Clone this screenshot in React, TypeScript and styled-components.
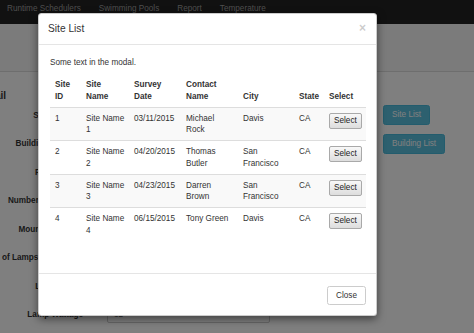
import React from "react";
import styled, { createGlobalStyle } from "styled-components";

const Global = createGlobalStyle`
  html, body { margin: 0; padding: 0; }
  body {
    font-family: "Liberation Sans", Arial, sans-serif;
    font-size: 8.2px;
    line-height: 11.25px;
    color: #333;
    background: #fff;
    overflow: hidden;
  }
  * { box-sizing: border-box; }
`;

const Page = styled.div`
  width: 474px;
  height: 333px;
  position: relative;
  overflow: hidden;
  background: #fff;
`;

const NavBar = styled.nav`
  height: 24px;
  background: #222;
  display: flex;
  align-items: flex-start;
  gap: 18px;
  padding: 3px 0 0 7px;
`;

const NavItem = styled.a`
  color: #9d9d9d;
  font-size: 8.2px;
  line-height: 12px;
  text-decoration: none;
  white-space: nowrap;
`;

const Band = styled.div`
  height: 48px;
  background: #f7f7f7;
  border-bottom: 1px solid #dcdcdc;
`;

const Form = styled.div`
  padding-top: 19px;
`;

const Legend = styled.div`
  height: 10px;
  width: 6px;
  display: flex;
  justify-content: flex-end;
  white-space: nowrap;
  font-weight: bold;
  font-size: 10px;
  line-height: 10px;
  color: #333;
`;

const Row = styled.div`
  height: 28.5px;
  display: grid;
  grid-template-columns: 83px 163px auto;
  column-gap: 24px;
  align-items: center;
`;

const Label = styled.label`
  display: flex;
  justify-content: flex-end;
  white-space: nowrap;
  font-weight: bold;
  color: #333;
`;

const Input = styled.input`
  height: 17px;
  width: 163px;
  border: 1px solid #ccc;
  border-radius: 2px;
  padding: 0 6px;
  font: inherit;
  color: #555;
  background: #fff;
`;

const InfoButton = styled.button`
  justify-self: start;
  margin-left: 89px;
  height: 20px;
  padding: 0 8px;
  border: 1px solid #46b8da;
  border-radius: 2.5px;
  background: #5bc0de;
  color: #fff;
  font: inherit;
  line-height: 18px;
`;

const Backdrop = styled.div`
  position: absolute;
  inset: 0;
  background: rgba(0, 0, 0, 0.5);
`;

const ModalLayer = styled.div`
  position: absolute;
  inset: 0;
  display: flex;
  align-items: flex-start;
  padding: 13px 0 0 38px;
`;

const Dialog = styled.div`
  width: 339px;
  background: #fff;
  border: 1px solid rgba(0, 0, 0, 0.2);
  border-radius: 3.5px;
  box-shadow: 0 3px 9px rgba(0, 0, 0, 0.5);
  display: flex;
  flex-direction: column;
`;

const Header = styled.div`
  height: 31px;
  padding: 0 10px 0 9px;
  border-bottom: 1px solid #e5e5e5;
  display: flex;
  align-items: center;
  justify-content: space-between;
`;

const Title = styled.h4`
  margin: 0;
  font-size: 10.2px;
  font-weight: normal;
  line-height: 12px;
  color: #333;
`;

const CloseX = styled.span`
  font-size: 12px;
  font-weight: bold;
  line-height: 12px;
  color: #000;
  opacity: 0.2;
  margin-top: -2px;
`;

const Body = styled.div`
  padding: 12px 10px 12px 11px;
`;

const Para = styled.p`
  margin: 0 0 6px;
`;

const Table = styled.table`
  width: 316px;
  table-layout: fixed;
  border-collapse: collapse;
  margin-bottom: 20px;
`;

const Th = styled.th`
  text-align: left;
  vertical-align: bottom;
  font-weight: bold;
  padding: 5px 5.5px 5px 5px;
  border-bottom: 1px solid #ddd;
  color: #333;
`;

const Tr = styled.tr<{ $striped: boolean }>`
  background: ${(p) => (p.$striped ? "#f9f9f9" : "#fff")};
`;

const Td = styled.td`
  vertical-align: top;
  padding: 5px 3px 5px 5px;
  border-top: 1px solid #ddd;
  color: #333;
`;

const SelectButton = styled.button`
  height: 16px;
  padding: 0 4px;
  border: 1px solid #a9a9a9;
  border-radius: 2px;
  background: linear-gradient(#f8f8f8, #dddddd);
  color: #222;
  font: inherit;
  line-height: 14px;
`;

const Footer = styled.div`
  border-top: 1px solid #e5e5e5;
  padding: 12px 10px 10px 12px;
  display: flex;
  justify-content: flex-end;
`;

const CloseButton = styled.button`
  height: 19px;
  padding: 0 8px;
  border: 1px solid #ccc;
  border-radius: 2.5px;
  background: #fff;
  color: #333;
  font: inherit;
  line-height: 17px;
`;

const widths = [31, 48, 52, 57, 56, 30, 42];

const sites = [
  { id: "1", name: "Site Name 1", date: "03/11/2015", contact: "Michael Rock", city: "Davis", state: "CA" },
  { id: "2", name: "Site Name 2", date: "04/20/2015", contact: "Thomas Butler", city: "San Francisco", state: "CA" },
  { id: "3", name: "Site Name 3", date: "04/23/2015", contact: "Darren Brown", city: "San Francisco", state: "CA" },
  { id: "4", name: "Site Name 4", date: "06/15/2015", contact: "Tony Green", city: "Davis", state: "CA" },
];

const formRows: { label: string; button?: string; value?: string }[] = [
  { label: "Site Address", button: "Site List" },
  { label: "Building Address", button: "Building List" },
  { label: "Fixture Type" },
  { label: "Number of Fixtures" },
  { label: "Mounting Height" },
  { label: "Number of Lamps per Fixture" },
  { label: "Lamp Count" },
  { label: "Lamp Wattage", value: "32" },
];

export default function App() {
  return (
    <Page>
      <Global />
      <NavBar>
        <NavItem>Runtime Schedulers</NavItem>
        <NavItem>Swimming Pools</NavItem>
        <NavItem>Report</NavItem>
        <NavItem>Temperature</NavItem>
      </NavBar>
      <Band />
      <Form>
        <Legend>Detail</Legend>
        {formRows.map((r) => (
          <Row key={r.label}>
            <Label>{r.label}</Label>
            <Input defaultValue={r.value ?? ""} />
            {r.button ? <InfoButton>{r.button}</InfoButton> : <span />}
          </Row>
        ))}
      </Form>
      <Backdrop />
      <ModalLayer>
        <Dialog>
          <Header>
            <Title>Site List</Title>
            <CloseX>×</CloseX>
          </Header>
          <Body>
            <Para>Some text in the modal.</Para>
            <Table>
              <colgroup>
                {widths.map((w, i) => (
                  <col key={i} style={{ width: w }} />
                ))}
              </colgroup>
              <thead>
                <tr>
                  <Th>Site ID</Th>
                  <Th>Site Name</Th>
                  <Th>Survey Date</Th>
                  <Th>Contact Name</Th>
                  <Th>City</Th>
                  <Th>State</Th>
                  <Th>Select</Th>
                </tr>
              </thead>
              <tbody>
                {sites.map((s, i) => (
                  <Tr key={s.id} $striped={i % 2 === 0}>
                    <Td>{s.id}</Td>
                    <Td>{s.name}</Td>
                    <Td>{s.date}</Td>
                    <Td>{s.contact}</Td>
                    <Td>{s.city}</Td>
                    <Td>{s.state}</Td>
                    <Td>
                      <SelectButton>Select</SelectButton>
                    </Td>
                  </Tr>
                ))}
              </tbody>
            </Table>
          </Body>
          <Footer>
            <CloseButton>Close</CloseButton>
          </Footer>
        </Dialog>
      </ModalLayer>
    </Page>
  );
}
